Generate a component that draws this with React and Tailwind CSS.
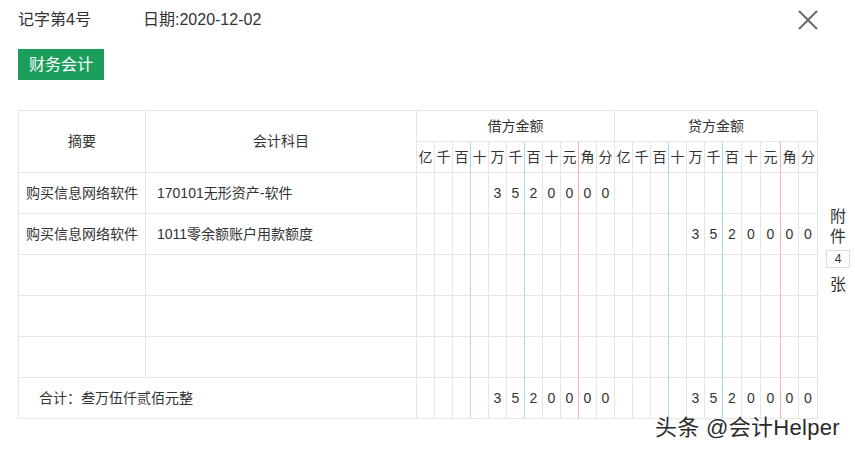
import React from 'react';

const FONT = { fontFamily: '"Liberation Sans", "Noto Sans CJK SC", sans-serif' };
const UNITS = ['亿', '千', '百', '十', '万', '千', '百', '十', '元', '角', '分'];
const DEBIT_W = [18, 18, 18, 18, 18, 18, 18, 18, 18, 18, 18];
const CREDIT_W = [18, 18, 18, 18, 18, 18, 19, 19, 20, 18, 19];

// border-right colour of each digit cell (index 2/5 blue, 8 red)
function lineClass(i) {
  if (i === 2 || i === 5) return 'border-r-[#a9d8f5]';
  if (i === 8) return 'border-r-[#f0b1b1]';
  return 'border-r-[#e6e6e6]';
}

const AMOUNT = ['', '', '', '', '3', '5', '2', '0', '0', '0', '0'];
const EMPTY = Array(11).fill('');

function DigitCells({ widths, values, h }) {
  return widths.map((w, i) => (
    <div
      key={i}
      style={{ width: w }}
      className={`${h} shrink-0 border-b border-r border-b-[#e6e6e6] ${lineClass(i)} flex items-center justify-center text-[14px] text-[#333]`}
    >
      {values[i]}
    </div>
  ));
}

function Row({ summary, account, debit, credit }) {
  return (
    <div className="flex">
      <div className="w-[127px] h-[41px] shrink-0 border-b border-r border-[#e6e6e6] flex items-center justify-center text-[14px] text-[#333]">
        {summary}
      </div>
      <div className="w-[271px] h-[41px] shrink-0 border-b border-r border-[#e6e6e6] flex items-center pl-[11px] text-[14px] text-[#333]">
        {account}
      </div>
      <DigitCells widths={DEBIT_W} values={debit} h="h-[41px]" />
      <DigitCells widths={CREDIT_W} values={credit} h="h-[41px]" />
    </div>
  );
}

export default function App() {
  return (
    <div className="relative w-[855px] h-[452px] bg-white overflow-hidden" style={FONT}>
      {/* top line */}
      <div className="flex items-center h-[22px] mt-[9px] pl-[18px] text-[16px] text-[#333] leading-[22px]">
        <span className="w-[125px]">记字第4号</span>
        <span>日期:2020-12-02</span>
        <svg className="ml-auto mr-[36px]" width="22" height="22" viewBox="0 0 22 22">
          <path d="M2 2 L20 20 M20 2 L2 20" stroke="#666" strokeWidth="1.8" fill="none" />
        </svg>
      </div>

      <div className="mt-[18px] ml-[18px] w-[86px] h-[31px] bg-[#1b9d5c] text-white text-[16px] flex items-center justify-center">
        财务会计
      </div>

      <div className="flex mt-[30px]">
        {/* voucher table */}
        <div className="ml-[18px] w-[800px] border-l border-t border-[#e6e6e6]">
          {/* header */}
          <div className="flex">
            <div className="w-[127px] h-[62px] shrink-0 border-b border-r border-[#e6e6e6] flex items-center justify-center text-[14px] text-[#333]">
              摘要
            </div>
            <div className="w-[271px] h-[62px] shrink-0 border-b border-r border-[#e6e6e6] flex items-center justify-center text-[14px] text-[#333]">
              会计科目
            </div>
            <div className="flex flex-col">
              <div className="h-[31px] border-b border-r border-[#e6e6e6] flex items-center justify-center text-[14px] text-[#333]">
                借方金额
              </div>
              <div className="flex">
                <DigitCells widths={DEBIT_W} values={UNITS} h="h-[31px]" />
              </div>
            </div>
            <div className="flex flex-col">
              <div className="h-[31px] border-b border-r border-[#e6e6e6] flex items-center justify-center text-[14px] text-[#333]">
                贷方金额
              </div>
              <div className="flex">
                <DigitCells widths={CREDIT_W} values={UNITS} h="h-[31px]" />
              </div>
            </div>
          </div>

          <Row summary="购买信息网络软件" account="170101无形资产-软件" debit={AMOUNT} credit={EMPTY} />
          <Row summary="购买信息网络软件" account="1011零余额账户用款额度" debit={EMPTY} credit={AMOUNT} />
          <Row summary="" account="" debit={EMPTY} credit={EMPTY} />
          <Row summary="" account="" debit={EMPTY} credit={EMPTY} />
          <Row summary="" account="" debit={EMPTY} credit={EMPTY} />

          {/* total */}
          <div className="flex">
            <div className="w-[398px] h-[41px] shrink-0 border-b border-r border-[#e6e6e6] flex items-center pl-[20px] text-[14px] text-[#333]">
              合计：叁万伍仟贰佰元整
            </div>
            <DigitCells widths={DEBIT_W} values={AMOUNT} h="h-[41px]" />
            <DigitCells widths={CREDIT_W} values={AMOUNT} h="h-[41px]" />
          </div>
        </div>

        {/* attachments */}
        <div className="ml-[8px] mt-[97px] w-[24px] flex flex-col items-center text-[16px] text-[#333] leading-[20px]">
          <span>附</span>
          <span>件</span>
          <div className="mt-[3px] w-[24px] h-[18px] border border-[#ddd] flex items-center justify-center text-[12px] leading-none">
            4
          </div>
          <span className="mt-[7px]">张</span>
        </div>
      </div>

      {/* watermark */}
      <div
        className="absolute left-[655px] top-[413px] text-[22px] leading-[30px] text-[#2b2b2b] tracking-[0.3px]"
        style={{ textShadow: '0 0 2px #fff, 0 0 2px #fff, 0 0 3px #fff' }}
      >
        头条 @会计Helper
      </div>
    </div>
  );
}
